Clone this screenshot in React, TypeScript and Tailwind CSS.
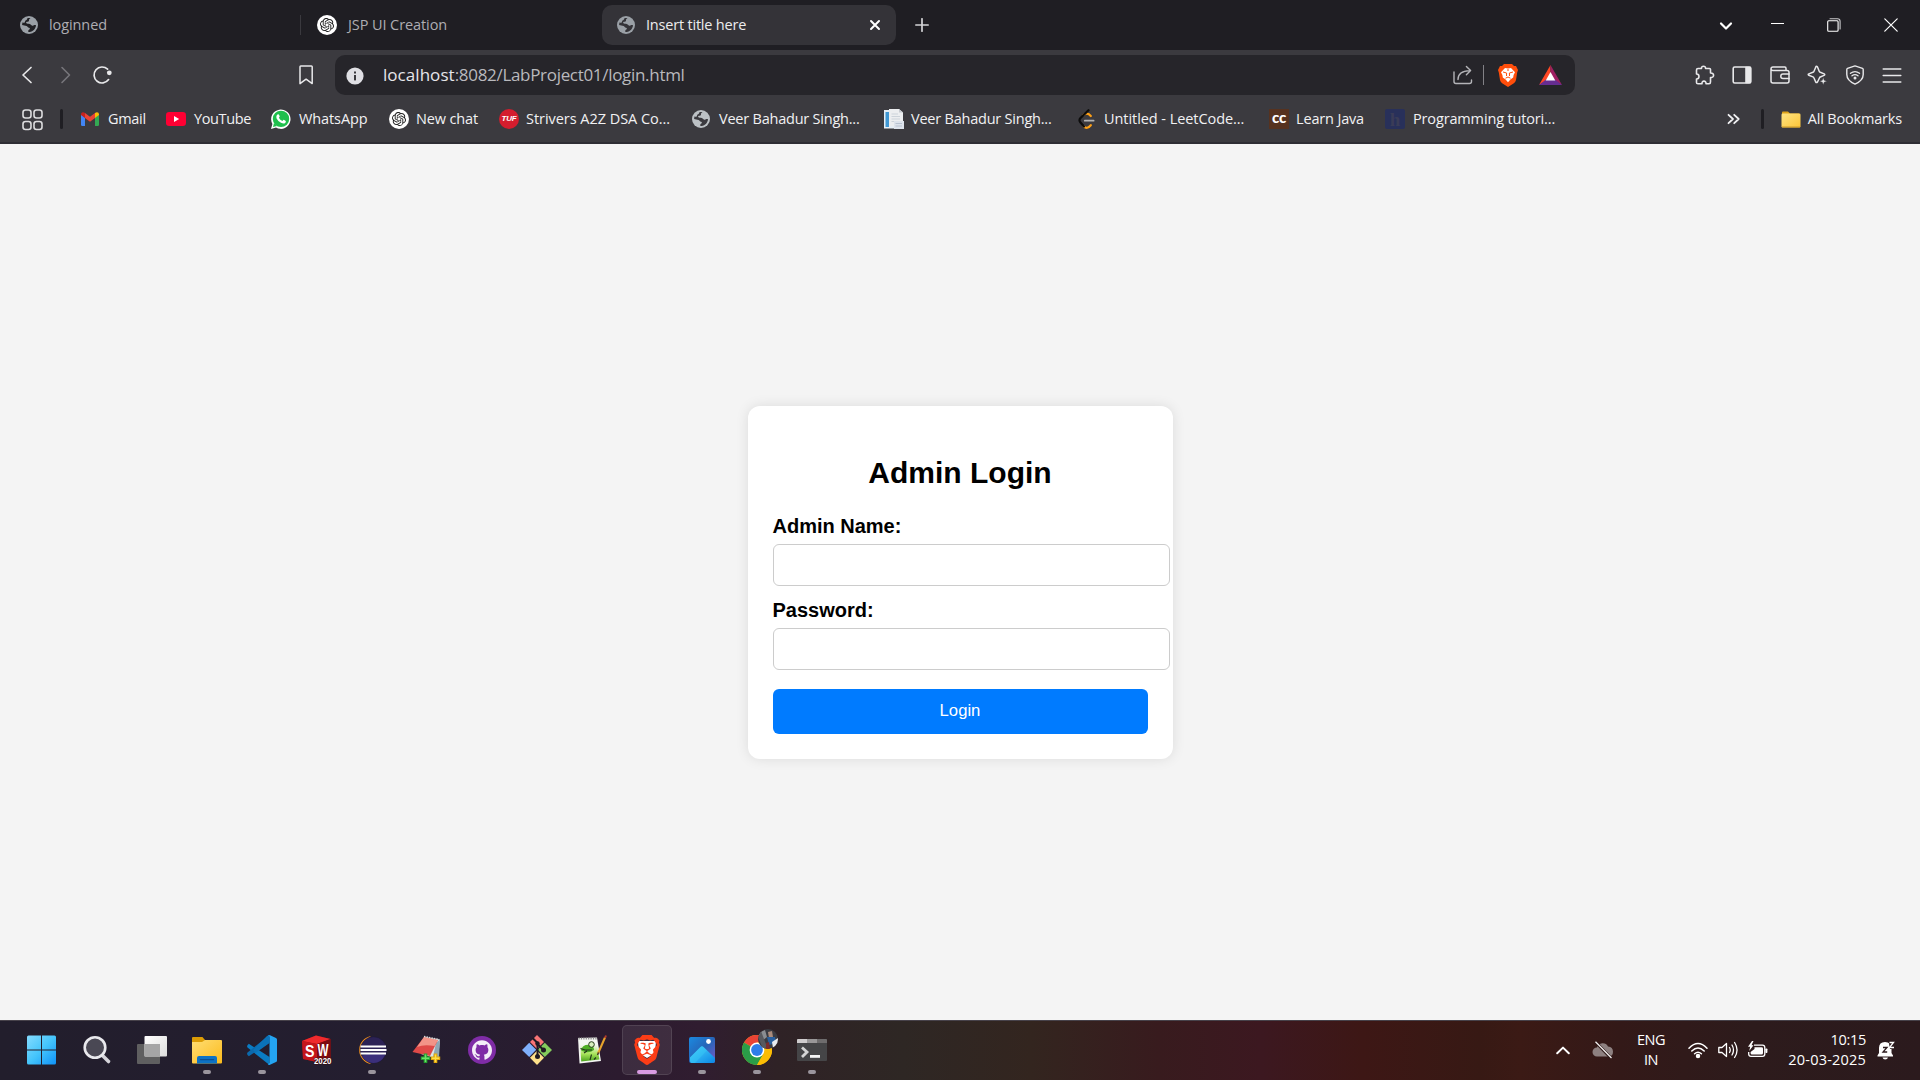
import type { ReactNode } from "react";
import { SiOpenai, SiBrave, SiGithub } from "react-icons/si";

function Globe({ fill = "#9aa0a6", hole = "#202024" }: { fill?: string; hole?: string }) {
  return (
    <svg viewBox="0 0 18 18" className="size-[18px] shrink-0">
      <circle cx="9" cy="9" r="9" fill={fill} />
      <path
        d="M10.5 2.2C9.3 2.6 8.7 3.6 9 4.6C9.2 5.5 8 5.8 7 5.8C5.8 5.9 5.9 7.2 6.8 7.6C8 8.1 9.6 7.6 10.6 8.6C11.5 9.6 12.2 9.9 13.4 9.4C14.4 9 15.2 8.9 16 9.2C15.8 12.4 13.2 15.6 9.6 16L8.4 15.9C8 15 8.3 14 9.2 13.6C10.2 13.2 10.1 12 9 11.8C7.8 11.5 7.7 10.4 6.6 9.9C5.2 9.3 3.4 9.4 2.1 8.9C2.1 8 2.3 7 2.7 6.2C4 7.2 4.7 6.8 5.1 5.2C5.4 4.2 6.8 4.2 7.1 3.3C7.2 2.8 7.2 2.5 7.4 2.2C8.4 1.9 9.6 1.9 10.5 2.2Z"
        fill={hole}
      />
    </svg>
  );
}

function OpenAI() {
  return (
    <span className="flex size-5 shrink-0 items-center justify-center rounded-full bg-white">
      <SiOpenai className="size-[14px] text-[#1c1c1c]" />
    </span>
  );
}

function Stroke({ children, w = 20, h = 20, sw = 1.4, className = "" }: { children: ReactNode; w?: number; h?: number; sw?: number; className?: string }) {
  return (
    <svg
      width={w}
      height={h}
      viewBox={`0 0 ${w} ${h}`}
      fill="none"
      stroke="currentColor"
      strokeWidth={sw}
      strokeLinecap="round"
      strokeLinejoin="round"
      className={`shrink-0 ${className}`}
    >
      {children}
    </svg>
  );
}

function TabStrip() {
  return (
    <div className="flex h-[50px] items-center bg-[#1f1e23] text-[14.5px] text-[#aeadb2]">
      <div className="flex w-[300px] items-center pl-5">
        <Globe />
        <span className="ml-[11px] tracking-[-0.09px]">loginned</span>
      </div>
      <div className="h-5 w-px bg-[#3a393e]" />
      <div className="flex w-[301px] items-center pl-4">
        <OpenAI />
        <span className="ml-[11px] tracking-[-0.09px]">JSP UI Creation</span>
      </div>
      <div className="flex h-10 w-[294px] items-center rounded-[10px] bg-[#343338] pl-[15px] pr-[15px] text-[#ececee]">
        <Globe hole="#343338" />
        <span className="ml-[11px] flex-1 tracking-[-0.2px]">Insert title here</span>
        <Stroke w={12} h={12} sw={2} className="text-white">
          <path d="M2 2L10 10M10 2L2 10" />
        </Stroke>
      </div>
      <Stroke w={14} h={14} sw={1.7} className="ml-[19px] text-[#d4d4d6]">
        <path d="M7 .8V13.2M.8 7H13.2" />
      </Stroke>
      <div className="flex-1" />
      <div className="flex w-[201px] items-center text-white">
        <Stroke w={14} h={14} sw={2.2} className="mt-0.5">
          <path d="M2 4.5L7 9.5L12 4.5" />
        </Stroke>
        <span className="-mt-[3px] ml-[38px] h-px w-[13px] bg-white" />
        <Stroke w={14} h={14} sw={1.1} className="ml-[43px]">
          <path d="M3 .8H10.5A2.6 2.6 0 0 1 13.1 3.4V11" stroke="#c9c9cb" />
          <rect x=".7" y="2.8" width="10.4" height="10.4" rx="1" />
        </Stroke>
        <Stroke w={14} h={14} sw={1.2} className="ml-[43px]">
          <path d="M.8 .8L13.2 13.2M13.2 .8L.8 13.2" />
        </Stroke>
      </div>
    </div>
  );
}

function AddressBar() {
  return (
    <div className="flex h-[50px] items-center text-[#e8e8ea]">
      <Stroke w={12} h={18} sw={1.7} className="ml-[21px]">
        <path d="M10 1.5L2 9L10 16.5" />
      </Stroke>
      <Stroke w={12} h={18} sw={1.6} className="ml-[27px] text-[#77767b]">
        <path d="M2 1.5L9.5 9L2 16.5" />
      </Stroke>
      <Stroke w={21} h={20} sw={1.7} className="ml-5">
        <path d="M16.6 14.6A8 8 0 1 1 15.6 4.2" />
        <circle cx="17.3" cy="7.8" r="2.4" fill="currentColor" stroke="none" />
      </Stroke>
      <Stroke w={15} h={20} sw={1.5} className="ml-[186px]">
        <path d="M1 1.8Q1 1 1.8 1H12.4Q13.2 1 13.2 1.8V18.6L7.1 14.2L1 18.6Z" />
      </Stroke>
      <div className="ml-[21px] flex h-10 w-[1240px] items-center rounded-[10px] bg-[#26252a] pl-[11px] pr-[13px]">
        <svg viewBox="0 0 18 18" className="mt-0.5 size-[18px]">
          <circle cx="9" cy="9" r="8.6" fill="#dfdfe4" />
          <rect x="8" y="4.5" width="2" height="2" fill="#3a393e" />
          <rect x="8" y="8" width="2" height="5.4" fill="#3a393e" />
        </svg>
        <span className="ml-[19px] flex-1 text-[17px] text-[#b9b9bd]">
          <span className="tracking-[0.05px] text-[#e6e6ea]">localhost</span>
          <span className="tracking-[-0.31px]">:8082/LabProject01/login.html</span>
        </span>
        <Stroke w={20} h={20} sw={1.4} className="text-[#b4b4b8]">
          <path d="M1 7V16.5Q1 18.5 3 18.5H16.5Q18.5 18.5 18.5 16.5V15M5 14.5Q5 6 16.8 5.6M13.4 1.4L17.6 5.6L13.4 9.8" />
        </Stroke>
        <span className="ml-2.5 h-5 w-px bg-[#828186]" />
        <svg viewBox="0 0 20 23" className="ml-3.5 h-[23px] w-5">
          <path d="M6 0H14L16 2L18 2L20 6L19.2 8.5L18 16Q17.5 18 15.5 19.5L10 23L4.500 19.5Q2.500 18 2 16L.8 8.500L0 6L2 2H4Z" fill="#ff4e0b" />
          <path d="M7 4L10 4.600L13 4L17 8.200L15.600 11L15.200 13.500L12.400 15.500L10 18.200L7.600 15.500L4.800 13.500L4.400 11L3 8.200Z" fill="#fff" />
          <path d="M5 8L8.600 9L8.500 12M15 8L11.400 9L11.500 12M7.500 14.200L10 13L12.500 14.200M10 5V7" fill="none" stroke="#ff4e0b" strokeWidth="1" />
        </svg>
        <svg viewBox="0 0 23 20" className="ml-[21px] h-5 w-[23px]">
          <path d="M11.5 0L0 20L11.5 13Z" fill="#ff4724" />
          <path d="M11.5 0L23 20L11.5 13Z" fill="#9e1f63" />
          <path d="M0 20H23L11.5 11Z" fill="#662d91" />
          <path d="M11.5 7L6.700 15.600H16.300Z" fill="#fff" />
        </svg>
      </div>
      <div className="ml-[119.5px] flex gap-[17.5px]">
        <Stroke sw={1.6}>
          <path d="M3 3.5H6.500C6 .4 11 .4 10.500 3.500H14.500Q15.500 3.500 15.500 4.500V8C19.600 7.600 19.600 13 15.500 12.600V17Q15.500 18.800 14 18.800H11C11.400 15.200 6.500 15.200 7 18.800H3Q1.500 18.800 1.500 17.500V14C4.800 14 4.800 9 1.500 9V5Q1.500 3.500 3 3.500Z" />
        </Stroke>
        <Stroke sw={1.6}>
          <rect x="1.200" y="2" width="17.600" height="16" rx="1.500" />
          <path d="M14 2.500H18.300V17.500H14Z" fill="currentColor" />
        </Stroke>
        <Stroke sw={1.500}>
          <path d="M16 5.500V3.200Q16 2 14.800 2H3Q1 2 1 4V16Q1 18 3 18H17Q19 18 19 16V7.300Q19 5.500 17 5.500H3Q1 5.500 1 4" />
          <path d="M19 9H13Q10.800 9 10.800 11.200T13 13.500H19" />
        </Stroke>
        <Stroke sw={1.500}>
          <path d="M9 1.500Q10 1 10.500 2L12.200 6.200Q12.500 7 13.300 7.300L17.200 8.900Q18.400 9.700 17 10.400L12.800 12.200L10.500 17Q9.500 18.200 8.700 17L7 13Q6.700 12.200 5.900 11.900L1.800 10.300Q.6 9.600 1.800 8.900L5.900 7.300Q6.700 7 7 6.200Z" />
          <path d="M16.300 12.600L17.200 15.200L19.800 16.200L17.200 17.200L16.300 19.800L15.300 17.200L12.700 16.200L15.300 15.200Z" fill="currentColor" stroke="#3b3a3f" strokeWidth=".4" />
        </Stroke>
        <Stroke sw={1.400}>
          <path d="M10 .9L17.500 3.400Q18.200 3.700 18.200 4.500V9.500Q18.200 15.500 10 19.100Q1.800 15.500 1.800 9.500V4.500Q1.800 3.700 2.500 3.400Z" />
          <path d="M5.500 8.300Q10 4.900 14.500 8.300M7 10.800Q10 8.400 13 10.800" />
          <circle cx="10" cy="13" r=".8" fill="currentColor" />
        </Stroke>
        <Stroke sw={1.500}>
          <path d="M1.200 4H18.800M1.200 10.500H18.800M1.200 17H18.800" />
        </Stroke>
      </div>
    </div>
  );
}

function Folder() {
  return (
    <svg viewBox="0 0 20 17" className="h-[17px] w-5">
      <path d="M1 1.500Q1 .5 2 .5H7L9 2.500H18V7H1Z" fill="#dfa31a" />
      <rect x=".5" y="2.500" width="19" height="14" rx="1.200" fill="url(#fold)" />
      <path d="M1 16H19" stroke="#c8972b" />
      <defs>
        <linearGradient id="fold" x1="0" y1="0" x2="1" y2="1">
          <stop stopColor="#ffe483" />
          <stop offset="1" stopColor="#fcc537" />
        </linearGradient>
      </defs>
    </svg>
  );
}

const bookmarks: { label: string; cell: string; text: string; icon: ReactNode }[] = [
  {
    label: "Gmail",
    cell: "w-[85px]",
    text: "ml-[9px] tracking-[-0.3px]",
    icon: (
      <svg viewBox="0 0 18 14" className="h-[14px] w-[18px]">
        <path d="M0 2.500L4 5.500V14H1.200Q0 14 0 12.800Z" fill="#4285f4" />
        <path d="M18 2.500L14 5.500V14H16.800Q18 14 18 12.800Z" fill="#34a853" />
        <path d="M4 1L9 4.800L14 1V6L9 9.800L4 6Z" fill="#ea4335" />
        <path d="M0 2.200Q.1 .2 2 .2Q3 .2 4 1V6L0 3Z" fill="#c5221f" />
        <path d="M18 2.200Q17.900 .2 16 .2Q15 .2 14 1V6L18 3Z" fill="#fbbc04" />
      </svg>
    ),
  },
  {
    label: "YouTube",
    cell: "w-[105px]",
    text: "ml-[8px] tracking-[-0.37px]",
    icon: (
      <svg viewBox="0 0 20 14" className="h-[14px] w-5">
        <rect width="20" height="14" rx="3.200" fill="#ff0033" />
        <path d="M8 4L13.200 7L8 10Z" fill="#fff" />
      </svg>
    ),
  },
  {
    label: "WhatsApp",
    cell: "w-[118px]",
    text: "ml-[8px] tracking-[-0.1px]",
    icon: (
      <svg viewBox="0 0 20 20" className="size-5">
        <path d="M0 20L1.400 15A9.700 9.700 0 1 1 5 18.600Z" fill="#fff" />
        <circle cx="10" cy="9.900" r="8.200" fill="#1fbf4d" />
        <path d="M2 18L3 14L6 17Z" fill="#1fbf4d" />
        <path d="M6.900 5.200Q7.700 5 8 5.700L8.700 7.300Q8.700 8 7.900 8.700Q9 11 11.400 12L12.300 11Q12.700 10.700 13.200 11L14.800 11.900Q15.200 13.200 13.800 14.200Q12.500 15 10 13.800Q7 12.300 5.600 9.400Q4.700 6.500 6.900 5.200Z" fill="#fff" />
      </svg>
    ),
  },
  { label: "New chat", cell: "w-[110px]", text: "ml-[7px] tracking-[-0.14px]", icon: <OpenAI /> },
  {
    label: "Strivers A2Z DSA Co...",
    cell: "w-[193px]",
    text: "ml-[7px] tracking-[-0.04px]",
    icon: (
      <span className="flex size-5 items-center justify-center rounded-full bg-[#d41d2e] font-['Liberation_Sans'] text-[8px] font-bold italic leading-none tracking-[-0.2px] text-white">
        TUF
      </span>
    ),
  },
  { label: "Veer Bahadur Singh...", cell: "w-[192px]", text: "ml-[9px] tracking-[-0.22px]", icon: <Globe fill="#bcc1c5" hole="#3b3a3f" /> },
  {
    label: "Veer Bahadur Singh...",
    cell: "w-[194px]",
    text: "ml-[7px] tracking-[-0.22px]",
    icon: (
      <svg viewBox="0 0 20 20" className="size-5">
        <rect y="1" width="14" height="18.500" fill="#e6eef5" />
        <rect x="1.500" y="3" width="3.500" height="15" fill="#3f97d3" />
        <path d="M5 0H15L19 3.500V17H5Z" fill="#eceef0" />
        <path d="M15 0V3.500H19Z" fill="#c6cad0" />
        <path d="M7.500 5H14M7.500 7.500H16M7.500 10H16M7.500 12.500H10" stroke="#ccd3da" />
        <rect x="10" y="12" width="10" height="8" fill="#dde3ec" />
        <path d="M11.500 14.500H18M11.500 17H18" stroke="#b8c2d0" />
      </svg>
    ),
  },
  {
    label: "Untitled - LeetCode...",
    cell: "w-[191px]",
    text: "ml-[9px] tracking-[-0.06px]",
    icon: (
      <svg viewBox="0 0 17 20" className="h-5 w-[17px]" fill="none" strokeWidth="2.200" strokeLinecap="round">
        <path d="M5.500 6Q9 2.800 12.800 7M5.800 17.200Q9 20.800 12.800 16.200" stroke="#ffa116" />
        <path d="M10.500 1.200L2.300 9.300Q.7 11.200 2.300 13.300L6 17.400" stroke="#0c0c0c" />
        <path d="M6.800 11.700H15.600" stroke="#b3b3b3" strokeWidth="1.800" />
      </svg>
    ),
  },
  {
    label: "Learn Java",
    cell: "w-[116px]",
    text: "ml-[7px] tracking-[-0.16px]",
    icon: (
      <span className="flex size-5 items-center justify-center bg-[#56321f] pb-[3px] font-['Lato'] text-[15px] font-black leading-none tracking-[-0.2px] text-white">
        cc
      </span>
    ),
  },
  {
    label: "Programming tutori...",
    cell: "w-[200px]",
    text: "ml-[8px] tracking-[-0.15px]",
    icon: (
      <span className="flex size-5 items-center justify-center rounded-[2px] bg-[#28305a] font-['Liberation_Serif'] text-[19px] font-bold leading-none text-[#3a3c57]">
        h
      </span>
    ),
  },
];

function BookmarksBar() {
  return (
    <div className="flex h-[42px] items-center whitespace-nowrap pb-1 text-[14.5px] text-[#f1f1f3]">
      <Stroke w={22} h={22} sw={1.6} className="ml-[22px] mt-px text-[#dcdcde]">
        <rect x="1" y="1" width="8" height="8" rx="2.500" />
        <rect x="12" y="1" width="8" height="8" rx="2.500" />
        <rect x="1" y="12.500" width="8" height="8" rx="2.500" />
        <rect x="12" y="12.500" width="8" height="8" rx="2.500" />
      </Stroke>
      <span className="ml-4 mr-[18px] h-5 w-[3px] rounded-full bg-[#1f1e23]" />
      {bookmarks.map((b, i) => (
        <div key={i} className={`flex shrink-0 items-center ${b.cell}`}>
          {b.icon}
          <span className={b.text}>{b.label}</span>
        </div>
      ))}
      <div className="flex flex-1 items-center justify-end pr-[18px]">
        <Stroke w={13} h={12} sw={1.8}>
          <path d="M1.500 1.800L6 6L1.500 10.200M7.200 1.800L11.700 6L7.200 10.200" />
        </Stroke>
        <span className="ml-[21px] mr-[17px] h-5 w-[3px] rounded-full bg-[#1f1e23]" />
        <Folder />
        <span className="ml-[7px] tracking-[-0.18px]">All Bookmarks</span>
      </div>
    </div>
  );
}

function LoginCard() {
  return (
    <form className="w-[425px] rounded-[12px] bg-white p-[25px] font-['Liberation_Sans'] text-black shadow-[0_0_12.500px_rgba(0,0,0,0.1)]">
      <h2 className="mt-[25px] text-center text-[30px] font-bold leading-[34px]">Admin Login</h2>
      <label className="mt-[24px] block text-[20px] font-bold leading-[24px]">Admin Name:</label>
      <input className="mt-[6px] block h-[42px] w-[397px] rounded-[6px] border border-[#ccc] bg-white" />
      <label className="mt-[12px] block text-[20px] font-bold leading-[24px]">Password:</label>
      <input type="password" className="mt-[6px] block h-[42px] w-[397px] rounded-[6px] border border-[#ccc] bg-white" />
      <button type="button" className="mt-[19px] block h-[45px] w-full rounded-[6px] bg-[#007bff] pb-px text-[16.670px] text-white">
        Login
      </button>
    </form>
  );
}

const apps: { icon: ReactNode; running?: boolean; active?: boolean }[] = [
  {
    icon: (
      <svg viewBox="0 0 30 30" className="size-[30px]">
        <defs>
          <linearGradient id="win" x1="0" y1="0" x2="1" y2="1">
            <stop stopColor="#85dcff" />
            <stop offset=".5" stopColor="#45c5fb" />
            <stop offset="1" stopColor="#0f92f7" />
          </linearGradient>
        </defs>
        <path d="M1.500 .5H14V14.500H0V2Q0 .5 1.500 .5ZM15 .5H27.500Q29 .5 29 2V14.500H15ZM0 15.500H14V29.500H1.500Q0 29.500 0 28ZM15 15.500H29V28Q29 29.500 27.500 29.500H15Z" fill="url(#win)" />
      </svg>
    ),
  },
  {
    icon: (
      <svg viewBox="0 0 30 30" className="size-[30px]" fill="none">
        <path d="M20 20L26.500 26.500" stroke="#d5d4da" strokeWidth="3.600" strokeLinecap="round" />
        <circle cx="13" cy="12.500" r="10.300" fill="#4a4854" stroke="#e9e9ed" strokeWidth="2.600" />
      </svg>
    ),
  },
  {
    icon: (
      <svg viewBox="0 0 30 30" className="size-[30px]">
        <defs>
          <linearGradient id="tv" x1="0" y1="0" x2="1" y2="1">
            <stop stopColor="#fff" />
            <stop offset="1" stopColor="#dcdcdc" />
          </linearGradient>
        </defs>
        <rect y="9" width="23" height="20" rx="1" fill="#5f5f60" />
        <rect x="7.500" y="1" width="22.500" height="20.500" rx="1" fill="url(#tv)" />
        <rect x="7.500" y="9" width="15.500" height="12.500" fill="#a5a5a6" />
      </svg>
    ),
  },
  {
    running: true,
    icon: (
      <svg viewBox="0 0 30 30" className="size-[30px]">
        <defs>
          <linearGradient id="fe" x1="0" y1="0" x2="1" y2="1">
            <stop stopColor="#ffdd73" />
            <stop offset="1" stopColor="#fcbb1c" />
          </linearGradient>
        </defs>
        <path d="M0 3Q0 2 1 2H10.500L13 5V10H0Z" fill="#dc9c05" />
        <path d="M0 7H10L13 5H29Q30 5 30 6V27.500Q30 28.500 29 28.500H1Q0 28.500 0 27.500Z" fill="url(#fe)" />
        <path d="M5 28.500V23Q5 21 7 21H23Q25 21 25 23V28.500Z" fill="#0d72c4" />
        <path d="M8.500 24.600H21.500" stroke="#0a4f93" strokeWidth="1.400" strokeLinecap="round" />
      </svg>
    ),
  },
  {
    running: true,
    icon: (
      <svg viewBox="0 0 30 30" className="size-[30px]">
        <path d="M1.800 8.800L22.500 22V30L.5 12.500Q-.4 11.300 .5 10.200Z" fill="#0a7cc4" />
        <path d="M1.800 21.300L22.500 7.500V0L.5 17.500Q-.4 18.700 .5 19.900Z" fill="#0b69ad" />
        <path d="M22.500 0L29 3Q30 3.500 30 4.600V25.400Q30 26.500 29 27L22.500 30Q21.500 30 20.800 29.300L22.500 28V2L20.800 .7Q21.500 0 22.500 0Z" fill="#24a4f1" />
        <path d="M20 1L22.500 0V8L8.500 18L6 15Z" fill="#0b72b8" />
      </svg>
    ),
  },
  {
    icon: (
      <svg viewBox="0 0 30 30" className="size-[30px]">
        <path d="M0 6L14 .500L28.500 4V23L15 27L1 24Z" fill="#8e1015" />
        <path d="M0 6L14 .500L28.500 4L15 9Z" fill="#ef2a2d" />
        <path d="M0 6L15 9V27L1 24Z" fill="#c3161b" />
        <path d="M15 9L28.500 4V23L15 27Z" fill="#7c0c10" />
        <text x="3" y="21.500" fontSize="17" fontWeight="700" fill="#fff" fontFamily="Liberation Sans" textLength="9.500" lengthAdjust="spacingAndGlyphs">S</text>
        <text x="15.500" y="20.500" fontSize="16" fontWeight="700" fill="#fff" fontFamily="Liberation Sans" textLength="11" lengthAdjust="spacingAndGlyphs">W</text>
        <text x="12" y="28.500" fontSize="8.500" fontWeight="700" fill="#fff" stroke="#3b0d10" strokeWidth="1.200" paintOrder="stroke" fontFamily="Liberation Sans" textLength="17.500" lengthAdjust="spacingAndGlyphs">2020</text>
      </svg>
    ),
  },
  {
    running: true,
    icon: (
      <svg viewBox="0 0 30 30" className="size-[30px]">
        <path d="M14 1A14.200 14.200 0 0 0 14 29A17 17 0 0 1 14 1Z" fill="#f7941e" />
        <circle cx="16.500" cy="15" r="13.200" fill="#2c2255" stroke="#1d1836" strokeWidth=".6" />
        <path d="M5 21Q16 15 28 20Q24 28 16.500 28Q9 28 5 21Z" fill="#3b2f7b" />
        <path d="M3.500 11.500H29M3.500 15H29.500M3.500 18.500H29" stroke="#fff" strokeWidth="2" />
      </svg>
    ),
  },
  {
    icon: (
      <svg viewBox="0 0 30 30" className="size-[30px]">
        <path d="M13 2L28 4.500L26 24L9 19Z" fill="#d9e4e6" />
        <path d="M24 8L28 4.500L27 24L21 22Z" fill="#8fa6b5" />
        <path d="M12 2L26 5L18 21L.5 17Z" fill="#df4a48" />
        <path d="M12 2L26 5L22.500 11Q12 9 5 12Z" fill="#f29488" />
        <path d="M12 1.500L27 4.500" stroke="#d8d8d8" strokeWidth="1.600" strokeDasharray="1.500 1" />
        <path d="M13.500 18.500V28M8.800 23.200H18.200" stroke="#25a32f" strokeWidth="3.600" />
        <path d="M13.500 19.500V27M9.800 23.200H17.200" stroke="#6ce06a" strokeWidth="1.400" />
        <path d="M23.500 18.500V28M18.800 23.200H28.200" stroke="#e4a80d" strokeWidth="3.600" />
        <path d="M23.500 19.500V27M19.800 23.200H27.200" stroke="#ffe046" strokeWidth="1.400" />
      </svg>
    ),
  },
  {
    icon: (
      <span className="flex size-7 items-center justify-center rounded-full bg-[#7f2ca6]">
        <SiGithub className="size-5 text-[#f4eef8]" />
      </span>
    ),
  },
  {
    icon: (
      <svg viewBox="0 0 30 30" className="size-[30px]">
        <path d="M15 0L22 7L15 14L8 7Z" fill="#f87476" />
        <path d="M7.200 7.800L14.200 14.800L7.200 22L0 15Z" fill="#7fb0fc" />
        <path d="M22.800 7.800L30 15L22.800 22L15.800 14.800Z" fill="#84cc5c" />
        <path d="M15 15.800L22 22.800L15 30L8 22.800Z" fill="#fde08a" />
        <path d="M10.500 3L15.500 8V21M15.500 9L21 14.500" stroke="#1f1a22" strokeWidth="2" fill="none" />
        <circle cx="15.500" cy="8.500" r="2.200" fill="#1f1a22" />
        <circle cx="15.500" cy="21.500" r="2.500" fill="#1f1a22" />
        <circle cx="21.500" cy="15" r="2.500" fill="#1f1a22" />
      </svg>
    ),
  },
  {
    icon: (
      <svg viewBox="0 0 30 30" className="size-[30px]">
        <defs>
          <linearGradient id="np" x1="0" y1="0" x2="0" y2="1">
            <stop offset=".25" stopColor="#f5f7f3" />
            <stop offset=".65" stopColor="#a9e45c" />
            <stop offset="1" stopColor="#4ba31d" />
          </linearGradient>
        </defs>
        <path d="M1 3L20 2.500L24 26L2.500 28.500Z" fill="#f3f5f1" />
        <path d="M3 5L19 4.500L22.500 24.500L4.200 26.500Z" fill="url(#np)" />
        <path d="M1.500 3.500H20" stroke="#8d8d8d" strokeWidth="1.800" strokeDasharray="1.200 1.200" />
        <path d="M4 15Q6 9 13 10Q17 11 17 15Q12 19 5 16Z" fill="#4fae26" />
        <circle cx="14.500" cy="9.500" r="2.800" fill="#d9f0c0" stroke="#263d18" strokeWidth="1" />
        <path d="M3.500 13.500L8 15H15M7 18L10 16M13 25L14.500 19.500M17 24.500L19 22.500" stroke="#20341a" strokeWidth="1.100" fill="none" />
        <path d="M28 2.500L21 18.500" stroke="#e7a32c" strokeWidth="2" />
        <path d="M29 .5L28 3" stroke="#b23c2c" strokeWidth="2" />
        <path d="M21.500 17.500L20.500 20" stroke="#3c3226" strokeWidth="1.400" />
      </svg>
    ),
  },
  {
    active: true,
    icon: (
      <span className="grid size-[30px] place-items-center">
        <svg viewBox="0 0 20 20" className="col-start-1 row-start-1 size-5">
          <path d="M1 1H19L18 13L10 18L2 13Z" fill="#fff" />
        </svg>
        <SiBrave className="col-start-1 row-start-1 size-[30px] text-[#fb3d17]" />
      </span>
    ),
  },
  {
    running: true,
    icon: (
      <svg viewBox="0 0 30 30" className="size-[30px]">
        <defs>
          <linearGradient id="ph" x1="0" y1="0" x2="1" y2="1">
            <stop stopColor="#1b8ae0" />
            <stop offset=".5" stopColor="#2665b8" />
            <stop offset="1" stopColor="#7a58c6" />
          </linearGradient>
          <linearGradient id="ph2" x1="0" y1="0" x2="1" y2="1">
            <stop stopColor="#4fd7fb" />
            <stop offset="1" stopColor="#0a86e6" />
          </linearGradient>
        </defs>
        <rect x="2" y="2" width="26" height="26" rx="2" fill="url(#ph)" />
        <path d="M3 22.500L13.500 12Q15 10.600 16.500 12L28 23V26Q28 28 26 28H4.500Q3 27.500 3 26Z" fill="url(#ph2)" />
        <path d="M3 22.500L13.500 12Q15 10.600 16.500 12L20 15.500L8 28H4.500Q3 27.500 3 26Z" fill="#35c8f5" opacity=".5" />
        <circle cx="21.500" cy="6.500" r="2.400" fill="#fff" />
      </svg>
    ),
  },
  {
    running: true,
    icon: (
      <span className="relative">
        <svg viewBox="0 0 30 30" className="size-[30px]">
          <circle cx="15" cy="15" r="15" fill="#fbbc05" />
          <path d="M15 15L2 7.500A15 15 0 0 1 28 7.500H15Z" fill="#ea4335" />
          <path d="M15 15L2 7.500A15 15 0 0 0 15 30L21.500 18.700Z" fill="#2a9d48" />
          <path d="M15 7.500H28A15 15 0 0 1 15 30L21.500 18.700Z" fill="#fbbc05" />
          <circle cx="15" cy="15" r="7.400" fill="#fff" />
          <circle cx="15" cy="15" r="5.900" fill="#2e7de9" />
        </svg>
        <svg viewBox="0 0 20 20" className="absolute left-4 top-[-6px] size-5">
          <defs>
            <clipPath id="av">
              <circle cx="10" cy="10" r="10" />
            </clipPath>
          </defs>
          <g clipPath="url(#av)">
            <rect width="20" height="20" fill="#3a3b42" />
            <path d="M0 4L7 1L9 8L4 12Z" fill="#8a8d92" />
            <path d="M3 2L9 18L5 20L0 8Z" fill="#57595f" />
            <path d="M10 3L14 2L15 8L11 9Z" fill="#a98b7c" />
            <path d="M9 8L17 8L18 14L11 16Z" fill="#285f9e" />
            <path d="M14 13L20 9V18L15 19Z" fill="#e8ebef" />
            <path d="M8 14L11 13L12 20H8Z" fill="#7a2c2c" />
          </g>
        </svg>
      </span>
    ),
  },
  {
    running: true,
    icon: (
      <svg viewBox="0 0 30 30" className="size-[30px]">
        <path d="M0 5Q0 4 1 4H29Q30 4 30 5V25Q30 26 29 26H1Q0 26 0 25Z" fill="#454547" />
        <path d="M0 5Q0 4 1 4H10V8H0Z" fill="#cfcccd" />
        <rect x="10" y="4" width="10" height="4" fill="#999798" />
        <path d="M20 4H29Q30 4 30 5V8H20Z" fill="#6e6c6d" />
        <path d="M5 12.500L10 17L5 22" stroke="#d5d5d5" strokeWidth="2.800" fill="none" />
        <rect x="13" y="20" width="10" height="2.800" fill="#f4f4f4" />
      </svg>
    ),
  },
];

function Taskbar() {
  return (
    <footer className="flex h-[60px] items-start border-t border-[#47424a] bg-[linear-gradient(90deg,#221e2c_0px,#241e30_400px,#2c1b2f_620px,#301d30_700px,#2f2226_776px,#2e2724_904px,#33251f_1031px,#381b1e_1159px,#3c1820_1261px,#3d1715_1363px,#371914_1480px,#3b1a15_1520px,#331918_1620px,#2d1b1c_1750px,#2b1a1d_1920px)] pl-[14px] font-['Open_Sans'] text-[14.5px] text-white">
      {apps.map((a, i) => (
        <div key={i} className="flex w-[55px] shrink-0 justify-center pt-1">
          <div className={a.active ? "flex h-[50px] w-[50px] flex-col items-center rounded-[5px] border border-white/10 bg-white/8 pt-[9px]" : "flex h-[50px] w-[50px] flex-col items-center pt-[10px]"}>
            <span className="flex h-[30px] items-center justify-center">{a.icon}</span>
            {a.active && <span className="mt-[5px] h-1 w-5 rounded-full bg-[#d99be2]" />}
            {a.running && <span className="mt-[5px] h-1 w-2 rounded-full bg-[#9a959d]" />}
          </div>
        </div>
      ))}
      <div className="flex h-[59px] flex-1 items-center justify-end pb-px pr-[25px]">
        <Stroke w={14} h={9} sw={2}>
          <path d="M1.200 7.200L7 1.600L12.800 7.200" />
        </Stroke>
        <svg viewBox="0 0 22 18" className="ml-[22px] h-[18px] w-[22px]">
          <path d="M5 15.500A4.500 4.500 0 0 1 5 6.500A6 6 0 0 1 16 5.500Q21 6 21 10.800Q21 15.500 16.500 15.500Z" fill="#8d8080" />
          <path d="M3.500 1L19 17" stroke="#2b1715" strokeWidth="3" />
          <path d="M3.500 .8L19.500 17" stroke="#f3efef" strokeWidth="1.300" />
        </svg>
        <div className="-mt-px ml-[22px] w-[30px] text-center leading-5">
          <div className="tracking-[-0.5px]">ENG</div>
          <div className="tracking-[-0.4px]">IN</div>
        </div>
        <Stroke w={20} h={17} sw={1.500} className="ml-[22px]">
          <path d="M1 6.200Q10 -3 19 6.200M3.800 9Q10 3 16.200 9M6.600 11.800Q10 8.600 13.400 11.800" />
          <circle cx="10" cy="14" r="1.500" fill="currentColor" />
        </Stroke>
        <Stroke w={20} h={18} sw={1.300} className="ml-[10px]">
          <path d="M.8 6.500H4L8.500 2.500V15.500L4 11.500H.8ZM11.500 6.500Q13 9 11.500 11.500M14 4Q17 9 14 14M16.600 1.500Q21.500 9 16.600 16.500" />
        </Stroke>
        <svg viewBox="0 0 21 18" className="ml-[9px] h-[18px] w-[21px]">
          <path d="M7 4.200H15.500Q17.800 4.200 17.800 6.500V13Q17.800 15.300 15.500 15.300H4Q1.700 15.300 1.700 13V11" fill="none" stroke="#fff" strokeWidth="1.300" />
          <path d="M7.500 6.200H14.500Q16 6.200 16 7.500V12Q16 13.500 14.500 13.500H5Q3.600 13.500 3.600 12V11L7.500 8Z" fill="#fff" />
          <rect x="18.400" y="7.500" width="2" height="4.500" rx=".8" fill="#fff" />
          <path d="M5 0L1 5.800H3.200L2.200 10L6.500 4.300H4.500L6.500 0Z" fill="#fff" />
        </svg>
        <div className="-mt-px ml-[17px] w-[81px] whitespace-nowrap text-right leading-5">
          <div className="tracking-[-0.3px]">10:15</div>
          <div className="tracking-[0.2px]">20-03-2025</div>
        </div>
        <svg viewBox="0 0 18 19" className="ml-[11px] h-[19px] w-[18px]">
          <path d="M2 12V7Q2 1 8 1Q14 1 14.500 7V12L16 14.500V15.500H.5V14.500Z" fill="#fff" />
          <path d="M5.500 16.500H11Q10.500 18.600 8.200 18.600Q6 18.600 5.500 16.500Z" fill="#fff" />
          <path d="M6 6.500H10L6 11H10.200" fill="none" stroke="#2b1a1d" strokeWidth="1.300" />
          <path d="M11.500 0H18V8H13Z" fill="#2b1a1d" />
          <path d="M12.500 1.500H16.500L12.500 6.500H17" fill="none" stroke="#fff" strokeWidth="1.300" />
        </svg>
      </div>
    </footer>
  );
}

export default function App() {
  return (
    <div className="flex h-[1080px] w-[1920px] flex-col overflow-hidden bg-[#f4f4f4]">
      <header className="h-[144px] shrink-0 border-b-2 border-[#2e2d34] bg-[#3b3a3f] font-['Open_Sans']">
        <TabStrip />
        <AddressBar />
        <BookmarksBar />
      </header>
      <main className="flex flex-1 items-center justify-center">
        <LoginCard />
      </main>
      <Taskbar />
    </div>
  );
}
